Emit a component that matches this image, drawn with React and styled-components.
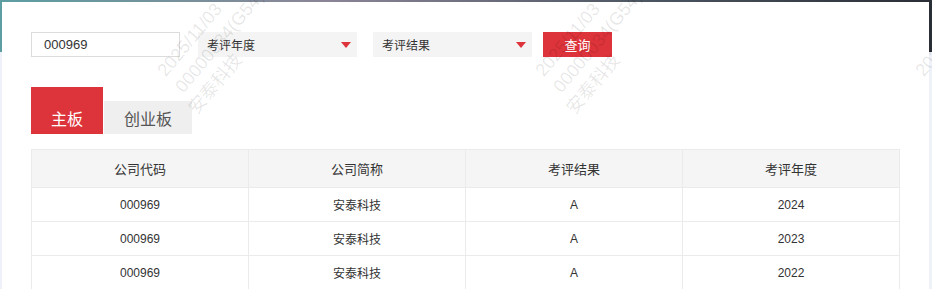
import React from 'react'
import styled, { createGlobalStyle } from 'styled-components'

const GlobalStyle = createGlobalStyle`
  html, body {
    margin: 0;
    padding: 0;
    background: #eef1f8;
  }
  * { box-sizing: border-box; }
`;

const rows = [
  { code: '000969', name: '安泰科技', result: 'A', year: '2024' },
  { code: '000969', name: '安泰科技', result: 'A', year: '2023' },
  { code: '000969', name: '安泰科技', result: 'A', year: '2022' },
];

// watermark columns, left position of each copy
const marks = [152, 530, 910];

export default function App() {
  return (
    <>
      <GlobalStyle />
      <Page>
        <Panel>
          <Toolbar>
            <CodeInput defaultValue="000969" />
            <Select $width={159}>
              <span>考评年度</span>
              <Arrow />
            </Select>
            <Select $width={159} $gap={16}>
              <span>考评结果</span>
              <Arrow />
            </Select>
            <QueryButton>查询</QueryButton>
          </Toolbar>

          <Tabs>
            <Tab $active>主板</Tab>
            <Tab>创业板</Tab>
          </Tabs>

          <Table>
            <thead>
              <tr>
                <th>公司代码</th>
                <th>公司简称</th>
                <th>考评结果</th>
                <th>考评年度</th>
              </tr>
            </thead>
            <tbody>
              {rows.map((r) => (
                <tr key={r.year}>
                  <td>{r.code}</td>
                  <td>{r.name}</td>
                  <td>{r.result}</td>
                  <td>{r.year}</td>
                </tr>
              ))}
            </tbody>
          </Table>
        </Panel>

        {marks.map((x) => (
          <Watermark key={x} style={{ left: x }}>
            <div>2025/11/03</div>
            <div>00000034(G54)</div>
            <div>安泰科技</div>
          </Watermark>
        ))}
      </Page>
    </>
  );
}

const Page = styled.div`
  position: relative;
  height: 289px;
  overflow: hidden;
  padding: 2px 3px 0 2px;
  background:
    linear-gradient(to bottom, transparent 52px, #eef1f8 52px),
    linear-gradient(to right, #5d9ea3, #8b8596 35%, #4b5560 70%, #2a2e36);
`;

const Panel = styled.div`
  background: #fff;
  height: 100%;
  padding: 30px 29px 0 29px;
  font-family: "Liberation Sans", "Noto Sans CJK SC", sans-serif;
  color: #333;
`;

const Toolbar = styled.div`
  display: flex;
  align-items: center;
  height: 25px;
`;

const CodeInput = styled.input`
  width: 149px;
  height: 25px;
  border: 1px solid #dcdcdc;
  padding: 0 0 0 12px;
  font: 13px "Liberation Sans", "Noto Sans CJK SC", sans-serif;
  color: #333;
  outline: none;
`;

const Select = styled.div`
  display: flex;
  align-items: center;
  justify-content: space-between;
  width: ${(p) => p.$width}px;
  height: 25px;
  margin-left: ${(p) => p.$gap || 18}px;
  padding: 0 6px 0 9px;
  background: #f4f4f4;
  font-size: 12px;
  color: #333;
`;

const Arrow = styled.i`
  width: 0;
  height: 0;
  border-left: 5px solid transparent;
  border-right: 5px solid transparent;
  border-top: 6px solid #dd333a;
`;

const QueryButton = styled.button`
  width: 69px;
  height: 25px;
  margin-left: 11px;
  border: none;
  background: #dd333a;
  color: #fff;
  font: 13px "Liberation Sans", "Noto Sans CJK SC", sans-serif;
  padding: 0;
`;

const Tabs = styled.div`
  display: flex;
  align-items: flex-end;
  gap: 1px;
  margin-top: 30px;
`;

const Tab = styled.div`
  display: flex;
  align-items: center;
  justify-content: center;
  width: ${(p) => (p.$active ? 72 : 88)}px;
  height: ${(p) => (p.$active ? 47 : 33)}px;
  padding-top: ${(p) => (p.$active ? 14 : 0)}px;
  background: ${(p) => (p.$active ? '#dd333a' : '#efefef')};
  color: ${(p) => (p.$active ? '#fff' : '#555')};
  font-size: 16px;
`;

const Table = styled.table`
  width: 869px;
  margin-top: 15px;
  border-collapse: collapse;
  table-layout: fixed;
  th, td {
    border: 1px solid #ebebeb;
    text-align: center;
    padding: 0;
    color: #333;
  }
  th {
    height: 38px;
    background: #f5f5f5;
    font-size: 13px;
    font-weight: normal;
  }
  td {
    height: 34px;
    font-size: 12px;
  }
`;

const Watermark = styled.div`
  position: absolute;
  top: 66px;
  transform-origin: 0 0;
  transform: rotate(-50deg);
  font: 18px/24px "Liberation Sans", "Noto Sans CJK SC", sans-serif;
  color: rgba(0, 0, 0, 0.1);
  white-space: nowrap;
  pointer-events: none;
  div:nth-child(2) { margin-left: -1px; }
  div:nth-child(3) { margin-left: -9px; }
`;
